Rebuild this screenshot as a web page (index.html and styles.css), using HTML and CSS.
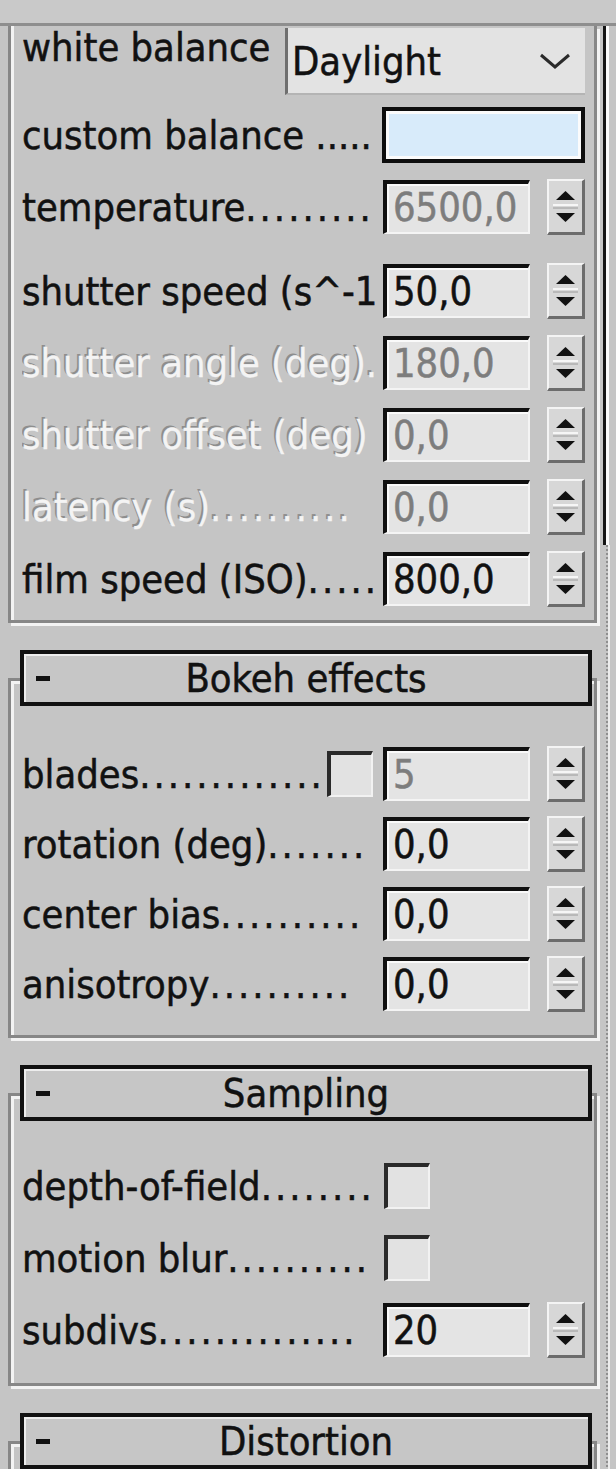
FILE: index.html
```html
<!DOCTYPE html>
<html lang="en">
<head>
    <meta charset="UTF-8">
    <meta name="viewport" content="width=device-width, initial-scale=1.0">
    <title>Physical camera</title>
    <link rel="stylesheet" href="styles.css">
</head>
<body>
<div class="topbar"></div>
<div class="sheet">
    <div class="content">
        <!-- white balance / shutter (top of rollout is scrolled away) -->
        <div class="group first">
            <div class="row top-row">
                <div class="label lift">white balance</div>
                <div class="select">
                    <span>Daylight</span>
                    <svg class="chevron" width="34" height="20" viewBox="0 0 34 20"><polyline points="3,4 17,16 31,4" fill="none" stroke="#2a2a2a" stroke-width="3"/></svg>
                </div>
            </div>
            <div class="row swatch-row">
                <div class="label">custom balance <span class="dots tight">.....</span></div>
                <div class="swatch"></div>
            </div>
            <div class="row temp-row">
                <div class="label">temperature<span class="dots">.........</span></div>
                <div class="field off">6500,0</div>
                <div class="spin"><svg width="33" height="51" viewBox="0 0 33 51"><polygon points="7,19 26,19 16.5,10" fill="#111"/><line x1="4" y1="24" x2="29" y2="24" stroke="#f6f6f6" stroke-width="2"/><line x1="4" y1="27" x2="29" y2="27" stroke="#9a9a9a" stroke-width="1"/><polygon points="7,32 26,32 16.5,41" fill="#111"/></svg></div>
            </div>
            <div class="row shutter-row">
                <div class="label">shutter speed (s^-1</div>
                <div class="field">50,0</div>
                <div class="spin"><svg width="33" height="51" viewBox="0 0 33 51"><polygon points="7,19 26,19 16.5,10" fill="#111"/><line x1="4" y1="24" x2="29" y2="24" stroke="#f6f6f6" stroke-width="2"/><line x1="4" y1="27" x2="29" y2="27" stroke="#9a9a9a" stroke-width="1"/><polygon points="7,32 26,32 16.5,41" fill="#111"/></svg></div>
            </div>
            <div class="row">
                <div class="label off-label">shutter angle (deg).</div>
                <div class="field off">180,0</div>
                <div class="spin"><svg width="33" height="51" viewBox="0 0 33 51"><polygon points="7,19 26,19 16.5,10" fill="#111"/><line x1="4" y1="24" x2="29" y2="24" stroke="#f6f6f6" stroke-width="2"/><line x1="4" y1="27" x2="29" y2="27" stroke="#9a9a9a" stroke-width="1"/><polygon points="7,32 26,32 16.5,41" fill="#111"/></svg></div>
            </div>
            <div class="row">
                <div class="label off-label">shutter offset (deg)</div>
                <div class="field off">0,0</div>
                <div class="spin"><svg width="33" height="51" viewBox="0 0 33 51"><polygon points="7,19 26,19 16.5,10" fill="#111"/><line x1="4" y1="24" x2="29" y2="24" stroke="#f6f6f6" stroke-width="2"/><line x1="4" y1="27" x2="29" y2="27" stroke="#9a9a9a" stroke-width="1"/><polygon points="7,32 26,32 16.5,41" fill="#111"/></svg></div>
            </div>
            <div class="row">
                <div class="label off-label">latency (s)<span class="dots">..........</span></div>
                <div class="field off">0,0</div>
                <div class="spin"><svg width="33" height="51" viewBox="0 0 33 51"><polygon points="7,19 26,19 16.5,10" fill="#111"/><line x1="4" y1="24" x2="29" y2="24" stroke="#f6f6f6" stroke-width="2"/><line x1="4" y1="27" x2="29" y2="27" stroke="#9a9a9a" stroke-width="1"/><polygon points="7,32 26,32 16.5,41" fill="#111"/></svg></div>
            </div>
            <div class="row">
                <div class="label">film speed (ISO)<span class="dots">.....</span></div>
                <div class="field">800,0</div>
                <div class="spin"><svg width="33" height="51" viewBox="0 0 33 51"><polygon points="7,19 26,19 16.5,10" fill="#111"/><line x1="4" y1="24" x2="29" y2="24" stroke="#f6f6f6" stroke-width="2"/><line x1="4" y1="27" x2="29" y2="27" stroke="#9a9a9a" stroke-width="1"/><polygon points="7,32 26,32 16.5,41" fill="#111"/></svg></div>
            </div>
        </div>

        <!-- Bokeh effects -->
        <div class="rollout">
            <div class="head"><span class="minus"></span><span class="title">Bokeh effects</span></div>
            <div class="group bokeh">
                <div class="row">
                    <div class="label">blades<span class="dots">.............</span></div>
                    <div class="check blades-check"></div>
                    <div class="field off">5</div>
                    <div class="spin"><svg width="33" height="51" viewBox="0 0 33 51"><polygon points="7,19 26,19 16.5,10" fill="#111"/><line x1="4" y1="24" x2="29" y2="24" stroke="#f6f6f6" stroke-width="2"/><line x1="4" y1="27" x2="29" y2="27" stroke="#9a9a9a" stroke-width="1"/><polygon points="7,32 26,32 16.5,41" fill="#111"/></svg></div>
                </div>
                <div class="row">
                    <div class="label">rotation (deg)<span class="dots">.......</span></div>
                    <div class="field">0,0</div>
                    <div class="spin"><svg width="33" height="51" viewBox="0 0 33 51"><polygon points="7,19 26,19 16.5,10" fill="#111"/><line x1="4" y1="24" x2="29" y2="24" stroke="#f6f6f6" stroke-width="2"/><line x1="4" y1="27" x2="29" y2="27" stroke="#9a9a9a" stroke-width="1"/><polygon points="7,32 26,32 16.5,41" fill="#111"/></svg></div>
                </div>
                <div class="row">
                    <div class="label">center bias<span class="dots">..........</span></div>
                    <div class="field">0,0</div>
                    <div class="spin"><svg width="33" height="51" viewBox="0 0 33 51"><polygon points="7,19 26,19 16.5,10" fill="#111"/><line x1="4" y1="24" x2="29" y2="24" stroke="#f6f6f6" stroke-width="2"/><line x1="4" y1="27" x2="29" y2="27" stroke="#9a9a9a" stroke-width="1"/><polygon points="7,32 26,32 16.5,41" fill="#111"/></svg></div>
                </div>
                <div class="row">
                    <div class="label">anisotropy<span class="dots">..........</span></div>
                    <div class="field">0,0</div>
                    <div class="spin"><svg width="33" height="51" viewBox="0 0 33 51"><polygon points="7,19 26,19 16.5,10" fill="#111"/><line x1="4" y1="24" x2="29" y2="24" stroke="#f6f6f6" stroke-width="2"/><line x1="4" y1="27" x2="29" y2="27" stroke="#9a9a9a" stroke-width="1"/><polygon points="7,32 26,32 16.5,41" fill="#111"/></svg></div>
                </div>
            </div>
        </div>

        <!-- Sampling -->
        <div class="rollout">
            <div class="head"><span class="minus"></span><span class="title">Sampling</span></div>
            <div class="group sampling">
                <div class="row">
                    <div class="label">depth-of-field<span class="dots">........</span></div>
                    <div class="check solo"></div>
                </div>
                <div class="row">
                    <div class="label">motion blur<span class="dots">..........</span></div>
                    <div class="check solo"></div>
                </div>
                <div class="row">
                    <div class="label">subdivs<span class="dots">..............</span></div>
                    <div class="field">20</div>
                    <div class="spin"><svg width="33" height="51" viewBox="0 0 33 51"><polygon points="7,19 26,19 16.5,10" fill="#111"/><line x1="4" y1="24" x2="29" y2="24" stroke="#f6f6f6" stroke-width="2"/><line x1="4" y1="27" x2="29" y2="27" stroke="#9a9a9a" stroke-width="1"/><polygon points="7,32 26,32 16.5,41" fill="#111"/></svg></div>
                </div>
            </div>
        </div>

        <!-- Distortion (cut off at the bottom) -->
        <div class="rollout">
            <div class="head"><span class="minus"></span><span class="title">Distortion</span></div>
            <div class="group rest"></div>
        </div>
    </div>
    <div class="scroll">
        <div class="thumb"></div>
        <div class="track"></div>
    </div>
</div>
</body>
</html>
```

FILE: styles.css
```css
body {
    margin: 0;
    width: 616px;
    height: 1469px;
    overflow: hidden;
    background-color: #c5c5c5;
    font-family: "DejaVu Sans Condensed", "DejaVu Sans", sans-serif;
    font-stretch: condensed;
    font-size: 39.5px;
    color: #111;
    -webkit-text-stroke: 0.5px currentColor;
}
.topbar {
    height: 23px;
    background-color: #c9c9c9;
    border-bottom: 3px solid #8e8e8e;
}
.sheet {
    display: flex;
}
.content {
    width: 600px;
    padding-left: 8px;
    box-sizing: border-box;
}

/* etched group frame */
.group {
    margin-right: 3px;
    border: 3px solid #878787;
    box-shadow: inset 3px 3px 0 #f3f3f3, 3px 3px 0 #f3f3f3;
    padding: 2px 9px 14px 11px;
}
.group.first {
    border-top: none;
    box-shadow: inset 3px 0 0 #f3f3f3, 3px 3px 0 #f3f3f3;
}
.rollout {
    margin-top: 27px;
}
.rollout .group {
    margin-top: -28px;
}
.bokeh {
    padding-top: 66px;
    padding-bottom: 24px;
}
.sampling {
    padding-top: 63px;
    padding-bottom: 26px;
}
.rest {
    height: 60px;
}

/* rollout title bar */
.head {
    position: relative;
    z-index: 1;
    height: 56px;
    box-sizing: border-box;
    margin: 0 8px 0 12px;
    border: 4px solid #111;
    background-color: #c6c6c6;
    box-shadow: inset 2px 2px 0 #ededed;
    display: grid;
    grid-template-columns: 60px 1fr 60px;
    align-items: center;
}
.minus {
    width: 14px;
    height: 5px;
    margin-left: 12px;
    background-color: #111;
}
.title {
    text-align: center;
    line-height: 44px;
}

/* control rows */
.row {
    display: flex;
    align-items: center;
    height: 54px;
    margin-top: 18px;
}
.group .row:first-child {
    margin-top: 0;
}
.bokeh .row {
    margin-top: 16px;
}
.top-row {
    height: 67px;
    align-items: flex-start;
}
.swatch-row {
    height: 56px;
    margin-top: 12px;
}
.temp-row {
    margin-top: 17px;
}
.shutter-row {
    margin-top: 30px;
}
.label {
    flex: 1;
    min-width: 0;
    white-space: nowrap;
    overflow: hidden;
    line-height: 46px;
}
.lift {
    line-height: 46px;
    margin-top: -5px;
    padding-top: 1px;
}
.dots {
    letter-spacing: 3px;
}
.dots.tight {
    letter-spacing: 0;
}
.off-label {
    color: #f4f4f4;
    -webkit-text-stroke: 0.3px #f4f4f4;
    text-shadow: -2px -2px 0 #8e8e8e;
}

.select {
    width: 300px;
    height: 67px;
    box-sizing: border-box;
    border-left: 3px solid #6f6f6f;
    border-bottom: 2px solid #b4b4b4;
    background-color: #e3e3e3;
    display: flex;
    align-items: center;
    padding-left: 4px;
}
.chevron {
    margin-left: auto;
    margin-right: 13px;
}
.swatch {
    width: 203px;
    height: 56px;
    box-sizing: border-box;
    border: 4px solid #0d0d0d;
    box-shadow: inset 0 0 0 3px #fbfbfb;
    background-color: #d8ebfa;
}
.field {
    width: 147px;
    height: 54px;
    box-sizing: border-box;
    border-top: 4px solid #101010;
    border-left: 4px solid #101010;
    border-right: 2px solid #f4f4f4;
    border-bottom: 2px solid #f4f4f4;
    background-color: #e4e4e4;
    box-shadow: inset 2px 2px 0 #fafafa;
    padding-left: 6px;
    line-height: 46px;
    color: #111;
}
.field.off {
    color: #7d7d7d;
}
.spin {
    width: 38px;
    height: 56px;
    box-sizing: border-box;
    margin-left: 17px;
    border-top: 2px solid #f4f4f4;
    border-left: 2px solid #f4f4f4;
    border-right: 3px solid #6c6c6c;
    border-bottom: 3px solid #6c6c6c;
    background-color: #d7d7d7;
}
.spin svg {
    display: block;
}
.check {
    width: 46px;
    height: 46px;
    box-sizing: border-box;
    border-top: 4px solid #2a2a2a;
    border-left: 4px solid #2a2a2a;
    border-right: 2px solid #f2f2f2;
    border-bottom: 2px solid #f2f2f2;
    background-color: #e2e2e2;
}
.blades-check {
    margin-right: 10px;
}
.check.solo {
    margin-right: 155px;
}

/* scrollbar edge on the right */
.scroll {
    width: 16px;
    display: flex;
    flex-direction: column;
}
.thumb {
    height: 519px;
    margin-left: 3px;
    border-left: 3px solid #141414;
    box-shadow: inset 3px 0 0 #fafafa;
}
.track {
    flex: 1;
    margin-left: 6px;
    border-left: 2px dotted #8f8f8f;
    box-shadow: inset 2px 0 0 #ececec;
}
```
